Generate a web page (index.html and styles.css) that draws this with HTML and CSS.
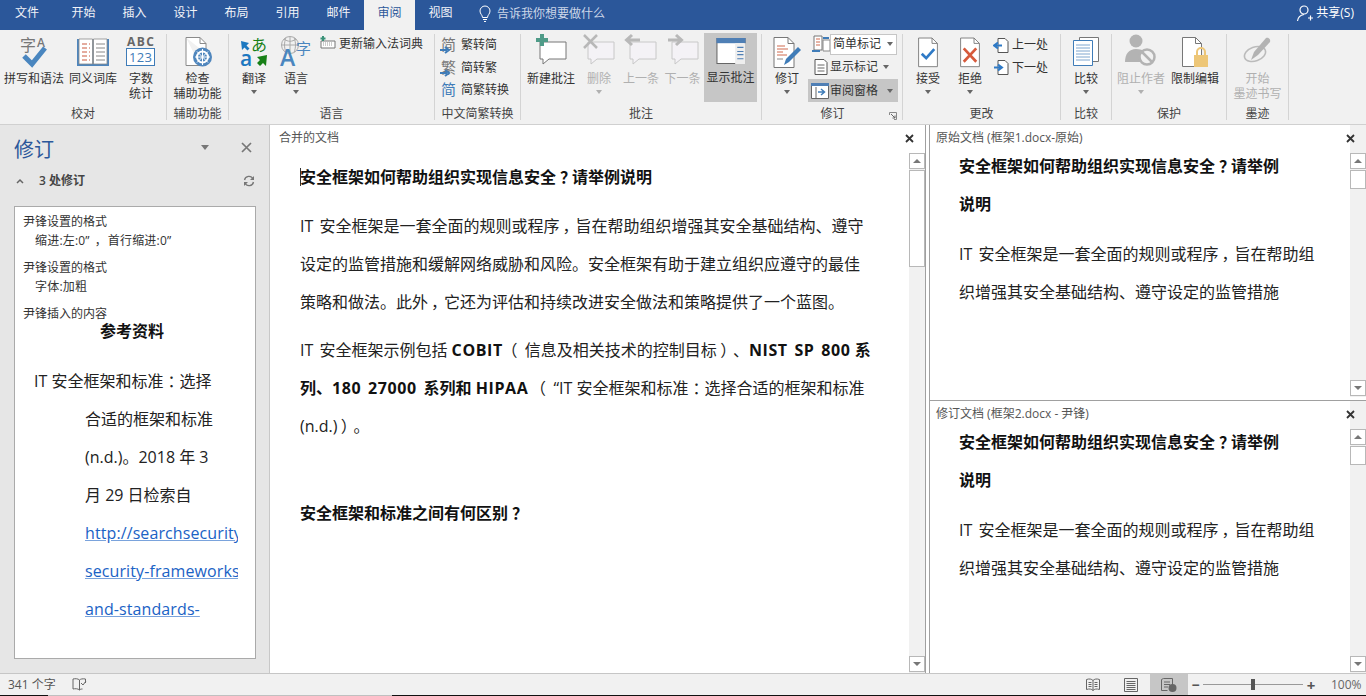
FILE: index.html
```html
<!DOCTYPE html>
<html lang="zh-CN">
<head>
<meta charset="utf-8">
<title>审阅</title>
<link rel="stylesheet" href="styles.css">
</head>
<body>
<div class="app">
  <header class="tabbar">
    <nav class="tabs">
      <span class="tab tab-first">文件</span><span class="tab">开始</span><span class="tab">插入</span><span class="tab">设计</span><span class="tab">布局</span><span class="tab">引用</span><span class="tab">邮件</span><span class="tab active">审阅</span><span class="tab">视图</span>
    </nav>
    <div class="tell">
      <svg width="14" height="18" viewBox="0 0 14 18" fill="none" stroke="#fff" stroke-width="1"><path d="M4.500 12.500C4.500 10 2 9 2 6a5 5 0 0 1 10 0c0 3-2.500 4-2.500 6.500z"/><path d="M5 14.500h4M6 16.500h2"/></svg>
      <span>告诉我你想要做什么</span>
    </div>
    <div class="share">
      <svg width="18" height="18" viewBox="0 0 18 18" fill="none" stroke="#fff" stroke-width="1.200"><circle cx="8" cy="6" r="4"/><path d="M1.500 17c.5-4 3-6 6.500-6.500M12 14h5M14.500 11.500v5"/></svg>
      <span>共享(S)</span>
    </div>
  </header>

  <section class="ribbon">
    <div class="group g1">
      <div class="items">
        <div class="btn w60"><svg class="ico" width="30" height="34" viewBox="0 0 30 34"><text x="1" y="17" class="svgt" font-size="16" fill="#777">字</text><text x="18" y="13" class="svgt" font-size="12" font-weight="600" fill="#777">A</text><path d="M5 22l8 8L26 14" fill="none" stroke="#4a86bf" stroke-width="5"/></svg><span class="lb">拼写和语法</span></div>
        <div class="btn w58"><svg class="ico" width="34" height="34" viewBox="0 0 34 34"><path d="M1 5h32v27H1z" fill="#4f86bd"/><path d="M3 5h13.500v25H3zM17.500 5H31v25H17.500z" fill="#fff" stroke="#8a8a8a" stroke-width=".8"/><path d="M6 10h8M6 14h8M6 18h8M6 22h8M6 26h8" stroke="#c9583f" stroke-width="1" stroke-dasharray="5 2"/><path d="M20 10h9M20 14h9M20 18h9M20 22h9M20 26h9" stroke="#888" stroke-width="1"/></svg><span class="lb">同义词库</span></div>
        <div class="btn w38"><svg class="ico" width="30" height="34" viewBox="0 0 30 34"><text x="1" y="12" class="svgt" font-size="12" font-weight="700" fill="#666" textLength="27">ABC</text><rect x=".5" y="14.500" width="28" height="17" fill="#fff" stroke="#3f7cb8"/><text x="3" y="28" class="svgt" font-size="13" fill="#3f7cb8" textLength="23">123</text></svg><span class="lb">字数<br>统计</span></div>
      </div>
      <div class="gname">校对</div>
    </div>
    <div class="group g2">
      <div class="items">
        <div class="btn wfull"><svg class="ico" width="30" height="34" viewBox="0 0 30 34"><path d="M3 3.500h14l6 6v10M23 9.500h-6v-6M3 3.500v28h14" fill="#fff" stroke="#8a8a8a"/><circle cx="19.500" cy="23" r="9.500" fill="#4f86bd"/><circle cx="19.500" cy="23" r="5.500" fill="none" stroke="#fff" stroke-width="2"/><path d="M19.500 15v16M12 23h15M14 17.500l11 11M25 17.500l-11 11" stroke="#fff"/></svg><span class="lb">检查<br>辅助功能</span></div>
      </div>
      <div class="gname">辅助功能</div>
    </div>
    <div class="group g3">
      <div class="items pl4">
        <div class="btn w42"><svg class="ico" width="30" height="34" viewBox="0 0 30 34"><path d="M2 7l1 9 2.500-2.500 3 3 2-2-3-3L10 9z" fill="#1c78c0"/><text x="12" y="17" class="svgt" font-size="16" fill="#178017">あ</text><text x="1" y="32" class="svgt" font-size="21" font-weight="600" fill="#1c78c0">a</text><path d="M28 21l-1 11-3-3-3 3-3-3 3-3-3-3z" fill="#178017"/></svg><span class="lb">翻译</span><i class="caret"></i></div>
        <div class="btn w42"><svg class="ico" width="32" height="34" viewBox="0 0 32 34"><circle cx="10" cy="11" r="8.500" fill="none" stroke="#aaa"/><path d="M1.500 11h17M10 2.500v17M4 5c4 3 8 3 12 0M6 3.500c-2 5-2 10 0 15M14 3.500c2 5 2 10 0 15" fill="none" stroke="#aaa"/><text x="0" y="32" class="svgt" font-size="23" font-weight="600" fill="#4a86bf">A</text><text x="16" y="20" class="svgt" font-size="15" fill="#4a86bf">字</text></svg><span class="lb">语言</span><i class="caret"></i></div>
        <div class="srow srow-dict"><svg class="sico" width="16" height="14" viewBox="0 0 16 14"><path d="M1 5h14v7H1z" fill="#fff" stroke="#777"/><path d="M3 7h10M3 9h10" stroke="#999" stroke-dasharray="1 1"/><path d="M3 0v5M.500 2.500h5" stroke="#3a9278" stroke-width="2"/></svg><span>更新输入法词典</span></div>
      </div>
      <div class="gname">语言</div>
    </div>
    <div class="group g4">
      <div class="items col pl6">
        <div class="srow"><span class="cjkico"><b>简</b><svg width="12" height="8" viewBox="0 0 12 8"><path d="M0 4h7M5 1l4 3-4 3" stroke="#3f7cb8" stroke-width="2" fill="none"/></svg></span><span>繁转简</span></div>
        <div class="srow"><span class="cjkico"><b>繁</b><svg width="12" height="8" viewBox="0 0 12 8"><path d="M0 4h7M5 1l4 3-4 3" stroke="#3f7cb8" stroke-width="2" fill="none"/></svg></span><span>简转繁</span></div>
        <div class="srow"><span class="cjkico"><b class="blue">简</b></span><span>简繁转换</span></div>
      </div>
      <div class="gname">中文简繁转换</div>
    </div>
    <div class="group g5">
      <div class="items pl4">
        <div class="btn w52"><svg class="ico" width="34" height="34" viewBox="0 0 34 34"><path d="M6 8h26v17H15l-6 5v-5H6z" fill="#fff" stroke="#777" stroke-width="1"/><path d="M8 0v12M2 6h12" stroke="#4f9b88" stroke-width="4"/></svg><span class="lb">新建批注</span></div>
        <div class="btn w44 off"><svg class="ico" width="34" height="34" viewBox="0 0 34 34"><path d="M6 8h26v17H15l-6 5v-5H6z" fill="#f4f2f6" stroke="#c8c8c8"/><path d="M2 1l13 13M15 1L2 14" stroke="#b8b8b8" stroke-width="2.500"/></svg><span class="lb">删除</span><i class="caret"></i></div>
        <div class="btn w40 off"><svg class="ico" width="34" height="34" viewBox="0 0 34 34"><path d="M6 8h26v17H15l-6 5v-5H6z" fill="#f4f2f6" stroke="#c8c8c8"/><path d="M16 6H3M8 1L2.500 6 8 11" stroke="#b8b8b8" stroke-width="3" fill="none"/></svg><span class="lb">上一条</span></div>
        <div class="btn w43 off"><svg class="ico" width="34" height="34" viewBox="0 0 34 34"><path d="M6 8h26v17H15l-6 5v-5H6z" fill="#f4f2f6" stroke="#c8c8c8"/><path d="M2 6h13M10 1l5.500 5L10 11" stroke="#b8b8b8" stroke-width="3" fill="none"/></svg><span class="lb">下一条</span></div>
        <div class="btn w53 on"><svg class="ico" width="30" height="26" viewBox="0 0 28 25"><path d="M.500.500h27v24H.500z" fill="#fff" stroke="#666"/><path d="M0 0h28v5H0z" fill="#4f7fb5"/><path d="M18 5h10v20H18z" fill="#eee"/><path d="M20 9h6M20 13h6M20 16h6M20 20h6" stroke="#4f7fb5"/></svg><span class="lb lb-on">显示批注</span></div>
      </div>
      <div class="gname">批注</div>
    </div>
    <div class="group g6">
      <div class="items pl4">
        <div class="btn w42"><svg class="ico" width="30" height="34" viewBox="0 0 30 34"><path d="M2 3.500h14l6 6v24H2z" fill="#fff" stroke="#777"/><path d="M16 3.500v6h6" fill="none" stroke="#777"/><path d="M5 12h8M5 15h11M5 18h6M5 21h10" stroke="#cf6a4f"/><path d="M5 25h6" stroke="#888"/><path d="M12 31l2-6 12-12 3 3-12 12z" fill="#3f7cb8"/></svg><span class="lb">修订</span><i class="caret"></i></div>
        <div class="mini">
          <div class="mini-row first"><svg width="20" height="20" viewBox="0 0 20 20"><path d="M3 2h8v14H3z" fill="#fff" stroke="#777"/><path d="M5 5h4M5 8h4M5 11h4" stroke="#cf6a4f"/><path d="M12 6h7v11h-7z" fill="#fff" stroke="#888"/><path d="M12 4h6M1 17h8" stroke="#3f7cb8" stroke-width="2"/></svg><div class="select"><span>简单标记</span><i class="caret"></i></div></div>
          <div class="mini-row"><svg class="mi" width="16" height="18" viewBox="0 0 16 18"><path d="M2 1.500h9l3 3v12H2z" fill="#fff" stroke="#555"/><path d="M4.500 7h7M4.500 10h7M4.500 13h7" stroke="#666"/></svg><span class="ml7">显示标记</span><i class="caret ml5"></i></div>
          <div class="mini-row hi"><svg class="mi2" width="18" height="16" viewBox="0 0 18 16"><path d="M.500.500h17v15H.500z" fill="#fff" stroke="#666"/><path d="M0 0h18v3H0z" fill="#4f7fb5"/><path d="M5 4v11" stroke="#666"/><path d="M7 9h6M10 6l3.500 3-3.500 3" stroke="#3f7cb8" stroke-width="1.500" fill="none"/></svg><span>审阅窗格</span><i class="caret end"></i></div>
        </div>
      </div>
      <div class="gname gname-launch">修订<svg class="launcher" width="8" height="8" viewBox="0 0 8 8"><path d="M.500 3V.500H7.500V7.500H5" fill="none" stroke="#888"/><path d="M2 2l4 4M6 3.500V6H3.500" fill="none" stroke="#666"/></svg></div>
    </div>
    <div class="group g7">
      <div class="items pl4">
        <div class="btn w42"><svg class="ico" width="24" height="34" viewBox="-1 -4 26 38"><path d="M1.500 .5h15l6 6v26h-21z" fill="#fff" stroke="#777"/><path d="M16.500 .5v6h6" fill="none" stroke="#777"/><path d="M5 18l5 5 9-10" fill="none" stroke="#2f7ac6" stroke-width="3"/></svg><span class="lb">接受</span><i class="caret"></i></div>
        <div class="btn w42"><svg class="ico" width="24" height="34" viewBox="-1 -4 26 38"><path d="M1.500 .5h15l6 6v26h-21z" fill="#fff" stroke="#777"/><path d="M16.500 .5v6h6" fill="none" stroke="#777"/><path d="M5 12l14 15M19 12L5 27" stroke="#d65a3c" stroke-width="3"/></svg><span class="lb">拒绝</span><i class="caret"></i></div>
        <div class="stack">
          <div class="srow"><svg class="sico2" width="16" height="17" viewBox="0 0 16 17"><path d="M5 1.500h7l3 3v11H5z" fill="#fff" stroke="#555"/><path d="M9 8.500H2M5 5.500l-4 3 4 3" fill="none" stroke="#2f7ac6" stroke-width="2"/></svg><span>上一处</span></div>
          <div class="srow"><svg class="sico2" width="16" height="17" viewBox="0 0 16 17"><path d="M5 1.500h7l3 3v11H5z" fill="#fff" stroke="#555"/><path d="M1 8.500h7M5 5.500l4 3-4 3" fill="none" stroke="#2f7ac6" stroke-width="2"/></svg><span>下一处</span></div>
        </div>
      </div>
      <div class="gname">更改</div>
    </div>
    <div class="group g8">
      <div class="items">
        <div class="btn wfull"><svg class="ico" width="26" height="34" viewBox="0 -3 26 34"><path d="M6.500.500h19v24h-19z" fill="#fff" stroke="#777"/><path d="M.500 3.500h19v25H.500z" fill="#fff" stroke="#3f7cb8"/><path d="M3 8h14M3 11h14M3 14h14M3 17h14M3 20h14M3 23h14" stroke="#7fa6cf"/></svg><span class="lb">比较</span><i class="caret"></i></div>
      </div>
      <div class="gname">比较</div>
    </div>
    <div class="group g9">
      <div class="items pl2">
        <div class="btn w54 off"><svg class="ico" width="32" height="34" viewBox="0 0 32 34"><circle cx="11" cy="7" r="6.500" fill="#b3b3b3"/><path d="M0 28c0-8 4-13 11-13s9 3 10 5l-6 8z" fill="#b3b3b3"/><circle cx="22" cy="23" r="7.500" fill="#f1f1f1" stroke="#b3b3b3" stroke-width="2.500"/><path d="M17 18l10 10" stroke="#b3b3b3" stroke-width="2.500"/></svg><span class="lb">阻止作者</span><i class="caret"></i></div>
        <div class="btn w54"><svg class="ico" width="28" height="34" viewBox="0 0 28 34"><path d="M1.500 3.500h13l6 6v23h-19z" fill="#fff" stroke="#777"/><path d="M14.500 3.500v6h6" fill="none" stroke="#777"/><rect x="13" y="21" width="14" height="12" fill="#edc677"/><path d="M16 21v-3a4 4 0 0 1 8 0v3" fill="none" stroke="#edc677" stroke-width="2"/></svg><span class="lb">限制编辑</span></div>
      </div>
      <div class="gname">保护</div>
    </div>
    <div class="group g10">
      <div class="items">
        <div class="btn wfull off"><svg class="ico" width="30" height="34" viewBox="0 -2 30 34"><ellipse cx="12" cy="18" rx="11" ry="7" fill="none" stroke="#bbb" stroke-width="1.500" transform="rotate(-20 12 18)"/><path d="M8 24l3-8L23 2c2-1 5 1 4 4L15 19z" fill="#b3b3b3"/></svg><span class="lb">开始<br>墨迹书写</span></div>
      </div>
      <div class="gname">墨迹</div>
    </div>
  </section>

  <main class="workspace">
    <aside class="revisions">
      <div class="rev-head">
        <h1>修订</h1>
        <i class="caret big"></i>
        <svg class="rev-x" width="11" height="11" viewBox="0 0 11 11"><path d="M1 1l9 9M10 1l-9 9" stroke="#777" stroke-width="1.700"/></svg>
      </div>
      <div class="rev-sum">
        <svg width="8" height="6" viewBox="0 0 8 6"><path d="M1 5l3-3 3 3" fill="none" stroke="#666" stroke-width="1.500"/></svg>
        <span>3 处修订</span>
        <svg class="rev-refresh" width="12" height="12" viewBox="0 0 12 12"><path d="M1.500 5A4.500 4.500 0 0 1 10 4M10.500 7A4.500 4.500 0 0 1 2 8" fill="none" stroke="#777" stroke-width="1.300"/><path d="M11 1v4H7M1 11V7h4" fill="#777"/></svg>
      </div>
      <div class="rev-list">
        <div class="rev-clip">
          <p class="who">尹锋设置的格式</p>
          <p class="what">缩进:左:0”<span class="pc">，</span>首行缩进:0”</p>
          <p class="who">尹锋设置的格式</p>
          <p class="what">字体:加粗</p>
          <p class="who last">尹锋插入的内容</p>
          <p class="ref-h">参考资料</p>
          <p class="ref-1">IT 安全框架和标准<span class="pc">：</span>选择</p>
          <p class="ref-n">合适的框架和标准</p>
          <p class="ref-n">(n.d.)。2018 年 3</p>
          <p class="ref-n">月 29 日检索自</p>
          <p class="ref-n link">http://searchsecurity</p>
          <p class="ref-n link">security-frameworks</p>
          <p class="ref-n link">and-standards-</p>
        </div>
      </div>
    </aside>

    <section class="doc-center">
      <div class="doc-col">
        <div class="pane-title">合并的文档<svg class="x" width="9" height="9" viewBox="0 0 9 9"><path d="M1 1l7 7M8 1L1 8" stroke="#333" stroke-width="1.800"/></svg></div>
        <article class="doc doc-main">
          <h2><span class="cursor"></span>安全框架如何帮助组织实现信息安全<span class="pq">？</span>请举例说明</h2>
          <p><span class="it">IT</span> 安全框架是一套全面的规则或程序<span class="pc">，</span>旨在帮助组织增强其安全基础结构、遵守<br>设定的监管措施和缓解网络威胁和风险。安全框架有助于建立组织应遵守的最佳<br>策略和做法。此外<span class="pc">，</span>它还为评估和持续改进安全做法和策略提供了一个蓝图。</p>
          <p><span class="it">IT</span> 安全框架示例包括 <b class="lat">COBIT</b><span class="po">（</span>信息及相关技术的控制目标<span class="pe">）</span>、<b class="lat">NIST SP 800</b> <b>系<br>列、</b><b class="lat">180 27000 </b><b>系列和</b> <b class="lat">HIPAA</b> <span class="po po-w">（</span>“IT 安全框架和标准<span class="pc">：</span>选择合适的框架和标准<br>(n.d.)<span class="pe">）</span>。</p>
          <h2 class="h-gap">安全框架和标准之间有何区别<span class="pq">？</span></h2>
        </article>
      </div>
      <div class="scroll tall"><span class="sb-up"></span><span class="sb-thumb t-main"></span><span class="sb-fill"></span><span class="sb-down"></span></div>
    </section>

    <section class="doc-right">
      <div class="pane">
        <div class="pane-col">
          <div class="pane-title small">原始文档 (框架1.docx-原始)<svg class="x" width="9" height="9" viewBox="0 0 9 9"><path d="M1 1l7 7M8 1L1 8" stroke="#333" stroke-width="1.800"/></svg></div>
          <article class="doc doc-side">
            <h2>安全框架如何帮助组织实现信息安全<span class="pq">？</span>请举例<br>说明</h2>
            <p><span class="it">IT</span> 安全框架是一套全面的规则或程序<span class="pc">，</span>旨在帮助组<br>织增强其安全基础结构、遵守设定的监管措施</p>
          </article>
        </div>
        <div class="scroll side"><span class="sb-up"></span><span class="sb-thumb t-side"></span><span class="sb-fill"></span><span class="sb-down"></span></div>
      </div>
      <div class="pane pane-b">
        <div class="pane-col">
          <div class="pane-title small">修订文档 (框架2.docx - 尹锋)<svg class="x" width="9" height="9" viewBox="0 0 9 9"><path d="M1 1l7 7M8 1L1 8" stroke="#333" stroke-width="1.800"/></svg></div>
          <article class="doc doc-side">
            <h2>安全框架如何帮助组织实现信息安全<span class="pq">？</span>请举例<br>说明</h2>
            <p><span class="it">IT</span> 安全框架是一套全面的规则或程序<span class="pc">，</span>旨在帮助组<br>织增强其安全基础结构、遵守设定的监管措施</p>
          </article>
        </div>
        <div class="scroll side"><span class="sb-up"></span><span class="sb-thumb t-side"></span><span class="sb-fill"></span><span class="sb-down"></span></div>
      </div>
    </section>
  </main>

  <footer class="status">
    <span class="count">341 个字</span>
    <svg class="st-book" width="15" height="15" viewBox="0 0 15 15"><path d="M7.500 3C6 1.500 3 1.500 1 2v10c2-.5 5-.5 6.500 1V3zM7.500 3c1-1 3-1.500 6-1v4M7.500 13c1-1 2-1 3-1" fill="none" stroke="#666"/><path d="M9 6l2 2 3-4" fill="none" stroke="#666"/></svg>
    <div class="st-right">
      <svg class="v1" width="14" height="14" viewBox="0 0 14 14"><path d="M.500 1.500c3-1 5-.5 6.500 1 1.500-1.500 3.500-2 6.500-1v10c-3-1-5-.5-6.500 1-1.500-1.500-3.500-2-6.500-1zM7 2.500v10M2.500 4.500h3M2.500 6.500h3M2.500 8.500h3M8.500 4.500h3M8.500 6.500h3M8.500 8.500h3" fill="none" stroke="#666"/></svg>
      <svg class="v2" width="14" height="14" viewBox="0 0 14 14"><path d="M.500.500h13v13H.500zM2.500 3.500h9M2.500 5.500h9M2.500 7.500h9M2.500 9.500h9M2.500 11.500h9" fill="none" stroke="#666"/></svg>
      <div class="v3"><svg width="16" height="14" viewBox="0 0 16 14"><path d="M.500 2.500c0-1 1-2 2-2h9v7M.500 1.500v11h6M3 4h6M3 6.500h6M3 9h4" fill="none" stroke="#666"/><circle cx="11.500" cy="10" r="4" fill="#666"/></svg></div>
      <span class="zm">−</span>
      <div class="slider"><span class="knob"></span></div>
      <span class="zp">+</span>
      <span class="pct">100%</span>
    </div>
  </footer>
</div>
</body>
</html>
```

FILE: styles.css
```css
* { box-sizing: border-box; }
html, body { margin: 0; padding: 0; height: 100%; overflow: hidden; }
body { font: 12px/16px "Open Sans", "Noto Sans CJK SC", sans-serif; color: #333; background: #fff; }
p, h1, h2 { margin: 0; font-weight: 400; }
.app { display: flex; flex-direction: column; height: 696px; width: 1366px; }

/* title bar */
.tabbar { height: 30px; background: #2b579a; display: flex; align-items: stretch; color: #fff; flex: none; }
.tabs { display: flex; }
.tab { width: 51px; line-height: 26px; text-align: center; color: #f1f3f8; }
.tab-first { width: 54px; margin-right: 4px; }
.tab.active { background: #f1f1f1; color: #2b579a; }
.tell { display: flex; align-items: center; gap: 5px; margin-left: 12px; color: #ccd6e8; padding-bottom: 3px; }
.share { margin-left: auto; display: flex; align-items: center; gap: 2px; padding: 0 12px 4px 0; }

/* ribbon */
.ribbon { height: 95px; background: #f1f1f1; border-bottom: 1px solid #d0d0d0; display: flex; flex: none; }
.group { position: relative; display: flex; flex-direction: column; height: 94px; flex: none; }
.group::after { content: ""; position: absolute; right: 0; top: 4px; bottom: 4px; width: 1px; background: #d4d4d4; }
.items { display: flex; height: 73px; padding-top: 3px; }
.items.col { flex-direction: column; padding-top: 4px; }
.pl2 { padding-left: 2px; } .pl4 { padding-left: 4px; } .pl6 { padding-left: 6px; }
.gname { text-align: center; line-height: 16px; color: #444; margin-top: 3px; padding-right: 1px; }
.gname-launch { position: relative; padding-right: 0; }
.launcher { position: absolute; right: 6px; bottom: 2px; }
.g1 { width: 167px; padding-left: 4px; } .g1 .gname { margin-left: -4px; }
.g2 { width: 62px; } .g3 { width: 206px; } .g4 { width: 86px; } .g5 { width: 241px; }
.g6 { width: 141px; } .g7 { width: 158px; } .g8 { width: 51px; } .g9 { width: 115px; } .g10 { width: 62px; }

.btn { display: flex; flex-direction: column; align-items: center; height: 69px; flex: none; color: #333; white-space: nowrap; }
.btn .ico { height: 34px; flex: none; margin-top: 1px; overflow: visible; }
.lb { display: block; text-align: center; line-height: 15px; margin-top: 3px; }
.w38 { width: 38px; } .w40 { width: 40px; } .w42 { width: 42px; } .w43 { width: 43px; } .w44 { width: 44px; }
.w52 { width: 52px; } .w53 { width: 53px; } .w54 { width: 54px; } .w58 { width: 58px; } .w60 { width: 60px; }
.wfull { width: 100%; padding-right: 1px; }
.btn.off .lb { color: #b0b0b0; }
.btn.on { background: #c6c6c6; }
.btn.on .ico { margin: 5px 0 0; height: 26px; margin-bottom: 3px; }
.caret { display: block; width: 0; height: 0; border: 3.500px solid transparent; border-top: 4px solid #666; border-bottom: 0; margin-top: 4px; flex: none; }
.btn.off .caret { border-top-color: #b0b0b0; }

.srow { display: flex; align-items: center; height: 22.500px; white-space: nowrap; color: #333; }
.srow-dict { align-items: flex-start; height: 20px; margin-top: 3px; padding-left: 3px; }
.srow-dict span { margin-left: 3px; }
.sico { flex: none; }
.cjkico { position: relative; width: 20px; height: 20px; flex: none; line-height: 18px; font-size: 15px; color: #777; }
.cjkico b { font-weight: 400; }
.cjkico .blue { color: #3f7cb8; }
.cjkico svg { position: absolute; left: -1px; bottom: 1px; }
.stack { margin-left: 2px; margin-top: 1px; }
.sico2 { margin-right: 3px; }

.mini { width: 90px; flex: none; }
.mini-row { display: flex; align-items: center; height: 23px; white-space: nowrap; padding-left: 3px; }
.mini-row .caret { margin-top: 0; }
.mini-row.first { height: 22px; }
.select { display: flex; align-items: center; width: 67px; height: 21px; margin-left: -1px; background: #fff; border: 1px solid #c6c6c6; padding-left: 2px; }
.select .caret { margin-left: 6px; }
.mi { margin-left: 2px; }
.ml7 { margin-left: 1px; }
.ml5 { margin-left: 5px; }
.mi2 { margin-right: 1px; }
.hi { background: #c6c6c6; margin-top: 1px; }
.caret.end { margin-left: auto; margin-right: 5px; }

/* workspace */
.workspace { flex: 1; display: flex; min-height: 0; }
.revisions { width: 270px; flex: none; background: #e6e6e6; border-right: 1px solid #c8c8c8; padding: 0 13px 14px 14px; display: flex; flex-direction: column; }
.rev-head { display: flex; align-items: center; height: 45px; flex: none; }
.rev-head h1 { font-size: 20px; line-height: 28px; color: #2b579a; padding-top: 5px; }
.caret.big { margin: 0 0 0 147px; border-width: 4.500px; border-top-width: 5px; border-bottom-width: 0; border-top-color: #777; }
.rev-x { margin-left: 32px; }
.rev-sum { display: flex; align-items: center; height: 22px; color: #444; font-weight: 600; flex: none; margin-left: 2px; }
.rev-sum span { margin-left: 15px; }
.rev-refresh { margin-left: auto; margin-right: 1px; }
.rev-list { flex: 1; margin-top: 14px; background: #fff; border: 1px solid #aaa; padding: 7px 0 0 8px; min-height: 0; }
.rev-clip { width: 215px; height: 100%; overflow: hidden; }
.who { line-height: 16px; }
.what { line-height: 20px; padding-left: 12px; margin-bottom: 9px; margin-top: 1px; letter-spacing: .2px; }
.what .pc { margin: 0 3px; }
.ref-h { font-size: 16px; font-weight: 700; color: #111; line-height: 22px; padding-left: 77px; margin-top: -2px; }
.ref-1, .ref-n { font-size: 16px; line-height: 38px; white-space: nowrap; color: #222; }
.ref-1 { padding-left: 11px; margin-top: 20px; }
.ref-n { padding-left: 62px; }
.link { color: #1a62c5; text-decoration: underline; text-decoration-color: #7aa3dc; letter-spacing: .1px; }

.doc-center { width: 656px; flex: none; display: flex; border-right: 1px solid #a0a0a0; }
.doc-col { flex: 1; min-width: 0; background: #fff; }
.pane-title { position: relative; height: 27px; line-height: 26px; padding-left: 9px; color: #555; }
.x { position: absolute; right: -5px; top: 9px; }
.doc { font-size: 16px; line-height: 38px; color: #222; white-space: nowrap; }
.doc h2 { font-size: 16px; font-weight: 700; color: #111; }
.doc h2 + p { margin-top: 11px; }
.doc p { margin-top: 10px; }
.doc-main { padding: 6px 0 0 30px; }
.cursor { display: inline-block; width: 1px; height: 18px; background: #333; vertical-align: -3px; margin-right: -1px; }
.h-gap { margin-top: 49px; }
.doc b { font-weight: 700; color: #111; }
.it { margin-right: 2px; }
.lat { letter-spacing: .6px; word-spacing: 2px; }

/* Word centres full-width punctuation in its em box: take the trimmed glyph and centre it in a 1em cell */
.pc, .pq, .po, .pe { display: inline-block; width: 1em; text-align: center; white-space: nowrap; line-height: 1; font-feature-settings: "palt"; }
.po { margin: 0 4px 0 2px; }
.po-w { margin-left: 1px; }

.scroll { width: 16px; flex: none; display: flex; flex-direction: column; background: #f1f1f1; padding: 28px 0 1px; }
.scroll.tall { background: linear-gradient(#fff 28px, #f1f1f1 29px); }
.sb-up, .sb-down { display: block; height: 16px; background: #fff; border: 1px solid #b8b8b8; position: relative; flex: none; }
.sb-up::after, .sb-down::after { content: ""; position: absolute; left: 3px; top: 5px; border: 4px solid transparent; }
.sb-up::after { border-bottom: 4px solid #777; border-top: 0; }
.sb-down::after { border-top: 4px solid #777; border-bottom: 0; }
.sb-thumb { display: block; background: #fff; border: 1px solid #b8b8b8; flex: none; margin-top: 1px; }
.t-main { height: 97px; }
.t-side { height: 19px; }
.sb-fill { flex: 1; }

.doc-right { flex: 1; min-width: 0; display: flex; flex-direction: column; border-left: 1px solid #a0a0a0; margin-left: 3px; }
.pane { height: 272px; display: flex; flex: none; overflow: hidden; }
.pane-b { flex: 1; height: auto; border-top: 1px solid #a0a0a0; margin-top: 3px; }
.pane-col { flex: 1; min-width: 0; background: #fff; }
.pane-title.small { padding-left: 6px; }
.doc-side { padding: 0 0 0 29px; margin-top: -5px; }
.doc-side p, .doc-side h2 + p { margin-top: 12px; }

/* status */
.status { height: 23px; flex: none; background: linear-gradient(to right, #111 48px, #c0c0c0 48px, #c0c0c0 392px, #111 392px) bottom / 100% 1px no-repeat, #f1f1f1; border-top: 1px solid #c6c6c6; display: flex; align-items: center; padding: 0 0 1px 8px; color: #555; }
.count { width: 64px; }
.st-right { margin-left: auto; display: flex; align-items: center; height: 100%; }
.v1 { margin-right: 24px; }
.v2 { margin-right: 12px; }
.v3 { width: 38px; height: 100%; background: #c6c6c6; display: flex; align-items: center; justify-content: center; }
.zm { width: 15px; text-align: center; font-size: 14px; font-weight: 700; }
.slider { position: relative; width: 100px; height: 1px; background: #999; }
.knob { position: absolute; left: 48px; top: -5px; width: 4px; height: 11px; background: #555; }
.zp { width: 16px; text-align: center; font-size: 15px; font-weight: 700; }
.pct { width: 47px; padding-left: 12px; color: #666; }
.svgt { font-family: "Open Sans", "Noto Sans CJK SC", sans-serif; }
```
